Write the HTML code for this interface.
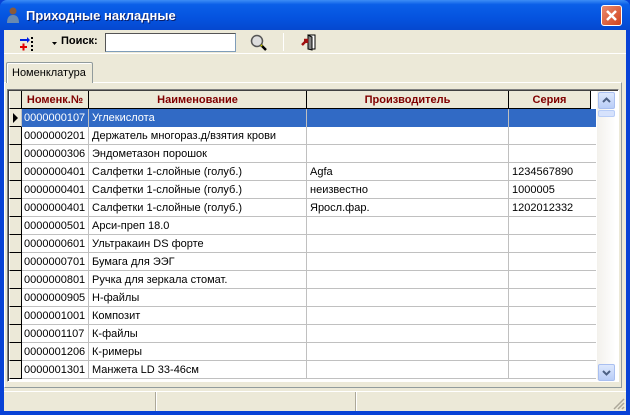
<!DOCTYPE html>
<html><head><meta charset="utf-8"><style>
*{margin:0;padding:0;box-sizing:border-box}
body{width:630px;height:415px;overflow:hidden;background:#0842d6;font-family:"Liberation Sans",Tahoma,sans-serif;font-size:11px;position:relative}
.abs{position:absolute}
#title{left:0;top:0;width:630px;height:30px;background:linear-gradient(#3d8df5 0%,#0a5fe8 15%,#0553df 60%,#0548cf 100%);border-radius:7px 7px 0 0}
#title span{position:absolute;left:26px;top:8px;color:#fff;font-weight:bold;font-size:13px;text-shadow:1px 1px 0 #0a1f6a}
#close{left:601px;top:5px;width:21px;height:21px;background:linear-gradient(135deg,#e98a6f,#d2431c);border:1px solid #fff;border-radius:3px}
#client{left:4px;top:30px;width:622px;height:381px;background:#ece9d8}
#tb{left:4px;top:30px;width:622px;height:24px;border-bottom:1px solid #fff}
#search{left:105px;top:33px;width:131px;height:19px;background:#fff;border:1px solid #7f9db9;border-top-color:#555;border-left-color:#555}
.row{position:absolute;left:9px;width:587px;height:18px;border-bottom:1px solid #c0c0c0}
.c{position:absolute;top:0;height:18px;line-height:19px;padding-left:3px;white-space:nowrap;overflow:hidden;border-right:1px solid #c0c0c0}
.ind{left:0;width:13px;background:#ece9d8;border-right:1px solid #000;border-left:1px solid #fff}
.h{background:#ece9d8;color:#800000;font-weight:bold;text-align:center;padding:0;border-right:1px solid #000;border-bottom:1px solid #000}
.sel .c{background:#316ac5;color:#fff;border-right-color:#c0c0c0}
.sel .ind{background:#ece9d8}
</style></head><body>
<div id="title" class="abs"><svg class="abs" style="left:6px;top:7px" width="14" height="16"><circle cx="7" cy="4" r="3.5" fill="#8a5a3a"/><path d="M1 16 Q1 8 7 8 Q13 8 13 16Z" fill="#6a8ab0"/></svg><span>Приходные накладные</span></div>
<div id="close" class="abs"><svg width="19" height="19"><path d="M5 5L14 14M14 5L5 14" stroke="#fff" stroke-width="2.5"/></svg></div>
<div id="client" class="abs"></div>
<div id="tb" class="abs"></div>
<svg class="abs" style="left:18px;top:34px" width="20" height="18"><path d="M2 6H11" stroke="#0020e0" stroke-width="2"/><path d="M9 3L12 6L9 9Z" fill="#0020e0"/><path d="M2 13H9M5.5 9.5V16.5" stroke="#e00000" stroke-width="2"/><path d="M14 3v2M14 7v2M14 11v2M14 15v2" stroke="#000" stroke-width="2"/></svg>
<svg class="abs" style="left:52px;top:42px" width="6" height="4"><path d="M0 0H5L2.5 3Z" fill="#000"/></svg>
<div class="abs" style="left:61px;top:35px;font-weight:bold">Поиск:</div>
<div id="search" class="abs"></div>
<svg class="abs" style="left:249px;top:33px" width="20" height="20"><circle cx="8" cy="8" r="5.5" fill="#ddd" stroke="#555" stroke-width="1.5"/><path d="M12 12L17 17" stroke="#000" stroke-width="2.5"/><path d="M12 13L13 12" stroke="#cc0" stroke-width="2"/></svg>
<div class="abs" style="left:283px;top:33px;width:1px;height:18px;background:#aca899;border-right:1px solid #fff"></div>
<svg class="abs" style="left:300px;top:33px" width="18" height="18"><path d="M8 2H15V16H8Z" fill="#fff" stroke="#000"/><path d="M8 2L12 4V17L8 16Z" fill="#888" stroke="#000"/><path d="M2 12L7 7M4 7H7V10" stroke="#a01010" stroke-width="2.5" fill="none"/></svg>
<div class="abs" style="left:4px;top:82px;width:618px;height:306px;border:1px solid #919b9c;border-top-color:#fff;border-left-color:#fff"></div>
<div class="abs" style="left:6px;top:62px;width:87px;height:21px;border:1px solid #919b9c;border-bottom:none;background:#ece9d8;border-radius:2px 2px 0 0;box-shadow:inset 1px 1px #fff"></div>
<div class="abs" style="left:12px;top:67px">Номенклатура</div>
<div class="abs" style="left:7px;top:89px;width:612px;height:293px;border:1px solid #808080;border-right-color:#fff;border-bottom-color:#fff;background:#fff;box-shadow:inset 1px 1px #404040"></div>
<div class="row" style="top:91px;height:18px;border:none">
<div class="c ind h" style="border-bottom:1px solid #000"></div>
<div class="c h" style="left:13px;width:67px">Номенк.№</div>
<div class="c h" style="left:80px;width:218px">Наименование</div>
<div class="c h" style="left:298px;width:202px">Производитель</div>
<div class="c h" style="left:500px;width:82px">Серия</div>
</div>
<div id="rows"></div>
<div class="abs" style="left:597px;top:91px;width:18px;height:289px;background:linear-gradient(90deg,#f3f1ec,#fefefe)"></div>
<div class="abs" style="left:598px;top:92px;width:17px;height:17px;background:linear-gradient(#dde8fd,#b9cdf7);border:1px solid #a9bff0;border-radius:2px"><svg width="15" height="15"><path d="M4 9L7.5 5.5L11 9" stroke="#4d6185" stroke-width="2" fill="none"/></svg></div>
<div class="abs" style="left:598px;top:110px;width:17px;height:7px;background:#d6e2fc;border:1px solid #b8cdf7;border-radius:2px"></div>
<div class="abs" style="left:598px;top:364px;width:17px;height:17px;background:linear-gradient(#dde8fd,#b9cdf7);border:1px solid #a9bff0;border-radius:2px"><svg width="15" height="15"><path d="M4 6L7.5 9.5L11 6" stroke="#4d6185" stroke-width="2" fill="none"/></svg></div>
<div class="abs" style="left:4px;top:391px;width:622px;height:1px;background:#fff"></div>
<div class="abs" style="left:155px;top:392px;width:2px;height:19px;border-left:1px solid #aca899;border-right:1px solid #fff"></div>
<div class="abs" style="left:355px;top:392px;width:2px;height:19px;border-left:1px solid #aca899;border-right:1px solid #fff"></div>
<svg class="abs" style="left:613px;top:398px" width="12" height="12"><path d="M11 1L1 11M11 5L5 11M11 9L9 11" stroke="#aca899" stroke-width="1.5"/></svg>
<script>
var d=[["0000000107","Углекислота","",""],["0000000201","Держатель многораз.д/взятия крови","",""],["0000000306","Эндометазон порошок","",""],["0000000401","Салфетки 1-слойные (голуб.)","Agfa","1234567890"],["0000000401","Салфетки 1-слойные (голуб.)","неизвестно","1000005"],["0000000401","Салфетки 1-слойные (голуб.)","Яросл.фар.","1202012332"],["0000000501","Арси-преп 18.0","",""],["0000000601","Ультракаин DS форте","",""],["0000000701","Бумага для ЭЭГ","",""],["0000000801","Ручка для зеркала стомат.","",""],["0000000905","Н-файлы","",""],["0000001001","Композит","",""],["0000001107","К-файлы","",""],["0000001206","К-римеры","",""],["0000001301","Манжета LD 33-46см","",""]];
var h="";d.forEach(function(r,i){h+='<div class="row'+(i==0?' sel':'')+'" style="top:'+(109+i*18)+'px"><div class="c ind" style="background:#ece9d8;border-bottom:1px solid #000">'+(i==0?'<svg width="8" height="18" style="position:absolute;left:2px;top:0"><path d="M1 4L6 9L1 14Z" fill="#000"/></svg>':'')+'</div><div class="c" style="left:13px;width:67px;padding-left:2px">'+r[0]+'</div><div class="c" style="left:80px;width:218px">'+r[1]+'</div><div class="c" style="left:298px;width:202px">'+r[2]+'</div><div class="c" style="left:500px;width:87px;border-right:none">'+r[3]+'</div></div>';});
document.getElementById("rows").innerHTML=h;
</script>
</body></html>
